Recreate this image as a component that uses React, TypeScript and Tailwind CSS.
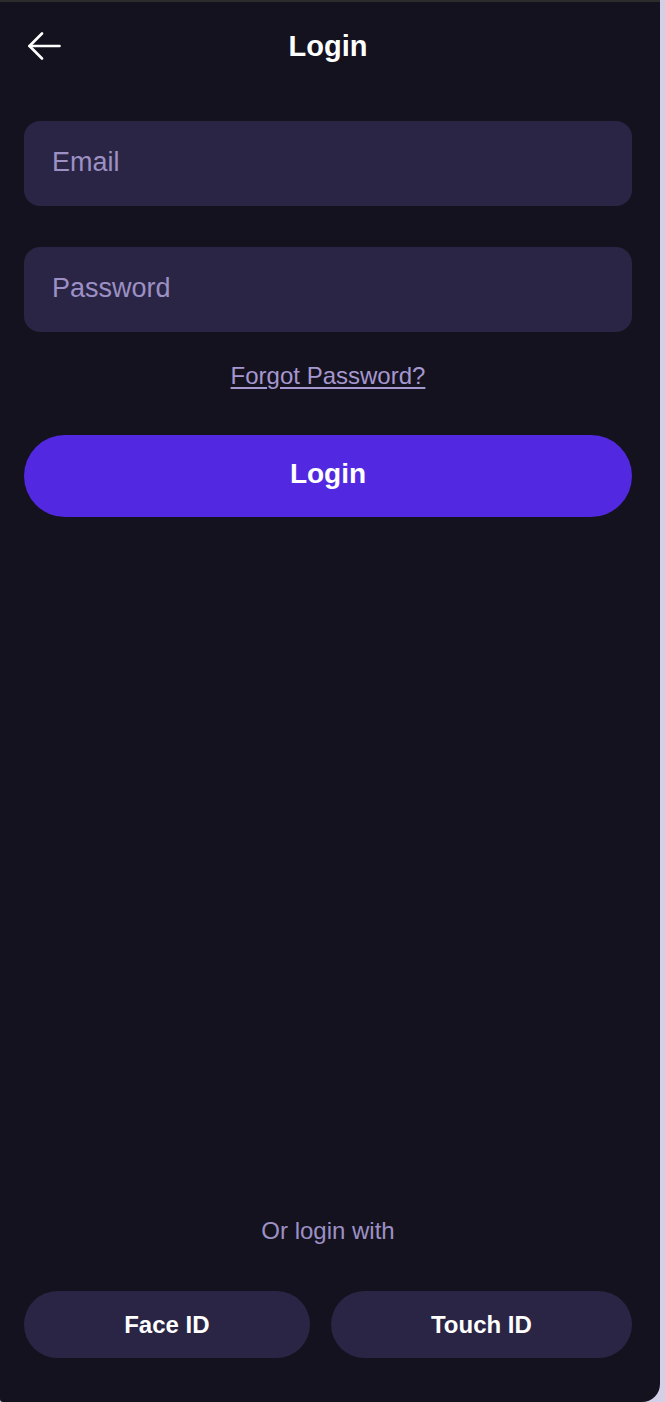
const BackArrow = () => (
  <svg width="33" height="28" viewBox="0 0 33 28" fill="none" stroke="white" strokeWidth="2.6" strokeLinecap="round" strokeLinejoin="round">
    <path d="M14 1.5 L1.5 14 L14 26.5" />
    <path d="M1.5 14 H31.5" />
  </svg>
);

export default function App() {
  return (
    <div className="flex h-[1402px] w-[665px] bg-[#d3cfe7] font-['Liberation_Sans',Arial,sans-serif]">
      <div className="flex h-full w-[660px] flex-col rounded-br-[18px] rounded-bl-[3px] border-t-2 border-[#2c2c2c] bg-[#15121f] pl-6 pr-7 pb-[44px]">
        {/* header */}
        <div className="grid h-[88px] grid-cols-[1fr_auto_1fr] items-center">
          <button className="flex w-fit items-center pl-1">
            <BackArrow />
          </button>
          <h1 className="text-[29px] leading-[34px] font-bold text-white">Login</h1>
          <div />
        </div>

        {/* form */}
        <div className="mt-[31px] flex flex-col">
          <input
            type="email"
            placeholder="Email"
            className="h-[85px] rounded-[16px] bg-[#2b2545] px-7 pb-[3px] text-[27px] text-white outline-none placeholder:text-[#9c90c4]"
          />
          <input
            type="password"
            placeholder="Password"
            className="mt-[41px] h-[85px] rounded-[16px] bg-[#2b2545] px-7 pb-[3px] text-[27px] text-white outline-none placeholder:text-[#9c90c4]"
          />
          <a href="#" className="mx-auto mt-[30px] text-[24px] leading-[28px] text-[#a597cf] underline underline-offset-[3px]">
            Forgot Password?
          </a>
          <button className="mt-[45px] h-[82px] rounded-full bg-[#5229e1] pb-[4px] text-[28px] font-bold text-white">
            Login
          </button>
        </div>

        <div className="flex-1" />

        {/* alternative login */}
        <p className="text-center text-[24px] leading-[28px] text-[#9c90c4]">Or login with</p>
        <div className="mt-[46px] flex gap-[21px]">
          <button className="h-[67px] flex-auto rounded-full bg-[#2b2545] px-[90px] text-[24px] font-bold text-white">
            Face ID
          </button>
          <button className="h-[67px] flex-auto rounded-full bg-[#2b2545] px-[90px] text-[24px] font-bold text-white">
            Touch ID
          </button>
        </div>
      </div>
    </div>
  );
}
